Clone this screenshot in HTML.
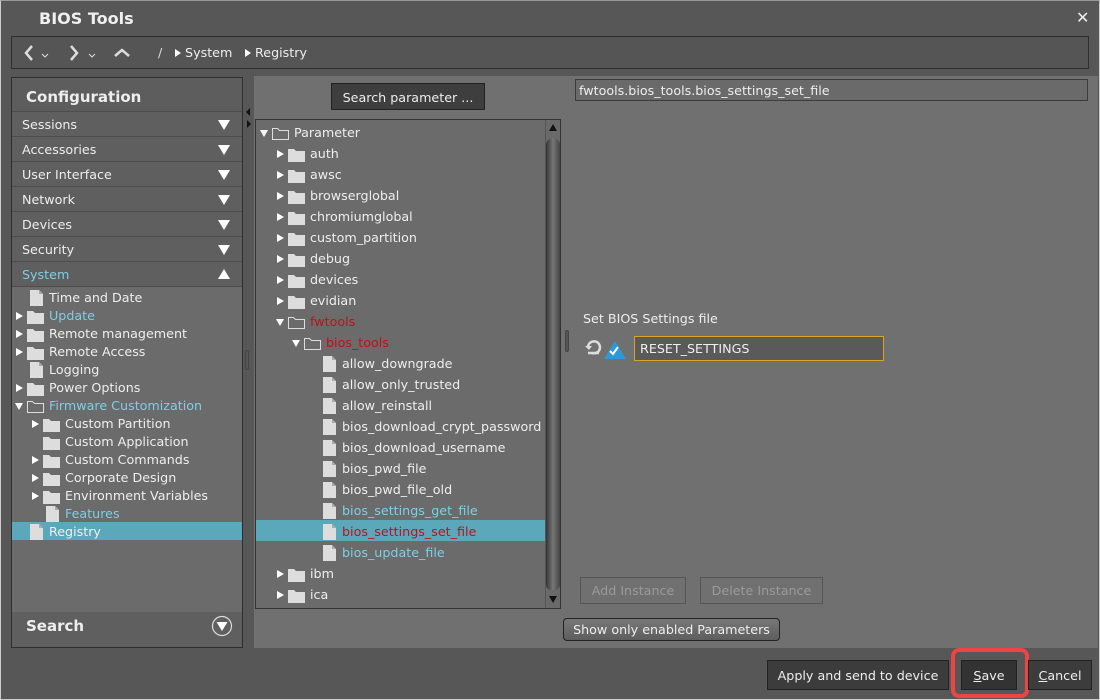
<!DOCTYPE html>
<html><head><meta charset="utf-8"><style>
*{margin:0;padding:0;box-sizing:border-box}
body{width:1100px;height:700px;background:#575757;font-family:"DejaVu Sans","Liberation Sans",sans-serif;font-size:12.7px;color:#eee;position:relative;overflow:hidden}
.a{position:absolute;white-space:nowrap}
.win{position:absolute;left:0;top:0;width:1100px;height:700px;border:1px solid #ccc;border-top-color:#999}
.tri{display:inline-block;width:0;height:0;border-top:4px solid transparent;border-bottom:4px solid transparent;border-left:7px solid #fff}
.trd{display:inline-block;width:0;height:0;border-left:4px solid transparent;border-right:4px solid transparent;border-top:7px solid #fff}
.sec{position:absolute;left:12px;width:230px;height:25px;border-top:1px solid #4c4c4c;background:#5f5f5f;line-height:26px;padding-left:10px}
.sec .dd{position:absolute;right:12px;top:8px;border-left:6px solid transparent;border-right:6px solid transparent;border-top:10px solid #fff;width:0;height:0}
.sec .du{position:absolute;right:12px;top:7px;border-left:6px solid transparent;border-right:6px solid transparent;border-bottom:10px solid #fff;width:0;height:0}
.lt{position:absolute;height:18px;line-height:20px;white-space:nowrap}
.mt{position:absolute;height:21px;line-height:23px;white-space:nowrap}
.btn{position:absolute;background:#3c3c3c;border:1px solid #222;color:#eee;text-align:center}
.blue{color:#7ccfe6}.red{color:#c0101a}
</style></head><body>
<div class="win"></div>
<div class="a" style="left:39px;top:9px;font-size:16px;font-weight:bold;color:#f0f0f0">BIOS Tools</div>
<div class="a" style="left:1076px;top:8px;font-size:16px;font-weight:bold">✕</div>
<div class="a" style="left:11px;top:36px;width:1078px;height:33px;background:#555;border:1px solid #2e2e2e"></div>
<svg class="a" style="left:20px;top:43px" width="120" height="20"><path d="M12 3l-6 7 6 7" stroke="#ddd" stroke-width="2.5" fill="none"/><path d="M22 11l3 3 3-3" stroke="#ddd" fill="none"/><path d="M51 3l6 7-6 7" stroke="#ddd" stroke-width="2.5" fill="none"/><path d="M69 11l3 3 3-3" stroke="#ddd" fill="none"/><path d="M95 13l7-6 7 6" stroke="#ddd" stroke-width="2.5" fill="none"/></svg>
<div class="a" style="left:158px;top:45px;color:#ddd">/</div>
<div class="a" style="left:175px;top:45px"><span class="tri" style="border-left-width:6px"></span> System</div>
<div class="a" style="left:245px;top:45px"><span class="tri" style="border-left-width:6px"></span> Registry</div>
<div class="a" style="left:11px;top:77px;width:232px;height:571px;background:#6b6b6b;border:1px solid #2e2e2e"></div>
<div class="a" style="left:12px;top:78px;width:230px;height:33px;background:#5d5d5d"></div>
<div class="a" style="left:26px;top:88px;font-size:15px;font-weight:bold">Configuration</div>
<div class="sec" style="top:111px">Sessions<span class="dd"></span></div>
<div class="sec" style="top:136px">Accessories<span class="dd"></span></div>
<div class="sec" style="top:161px">User Interface<span class="dd"></span></div>
<div class="sec" style="top:186px">Network<span class="dd"></span></div>
<div class="sec" style="top:211px">Devices<span class="dd"></span></div>
<div class="sec" style="top:236px">Security<span class="dd"></span></div>
<div class="sec blue" style="top:261px;border-bottom:1px solid #4c4c4c;height:26px">System<span class="du"></span></div>
<div class="a" style="left:12px;top:522px;width:230px;height:18px;background:#5aa8b9"></div>
<div class="a" style="left:12px;top:612px;width:230px;height:35px;background:#5f5f5f"></div>
<div class="a" style="left:26px;top:617px;font-size:15px;font-weight:bold">Search</div>
<svg class="a" style="left:211px;top:615px" width="22" height="22"><circle cx="11" cy="11" r="9.5" fill="none" stroke="#ddd" stroke-width="1.2"/><path d="M5.5 7h11L11 16z" fill="#fff"/></svg>
<div id="lt"></div>
<div class="a" style="left:246px;top:108px;width:0;height:0;border-top:4px solid transparent;border-bottom:4px solid transparent;border-right:4px solid #111"></div>
<div class="a" style="left:247px;top:120px;width:0;height:0;border-top:4px solid transparent;border-bottom:4px solid transparent;border-left:4px solid #111"></div>
<div class="a" style="left:245px;top:350px;width:4px;height:20px;border:1px solid #444;border-radius:2px"></div>
<div class="a" style="left:254px;top:76px;width:844px;height:572px;background:#707070"></div>
<div class="btn" style="left:331px;top:83px;width:154px;height:27px;line-height:27px;background:#3e3e3e">Search parameter ...</div>
<div class="a" style="left:575px;top:79px;width:513px;height:22px;background:#6a6a6a;border:1px solid #3c3c3c;line-height:21px;padding-left:3px">fwtools.bios_tools.bios_settings_set_file</div>
<div class="a" style="left:255px;top:119px;width:306px;height:490px;background:#6b6b6b;border:1px solid #333"></div>
<div class="a" style="left:545px;top:120px;width:15px;height:488px;background:#6a6a6a;border-left:1px solid #555"></div>
<div class="a" style="left:546px;top:138px;width:14px;height:452px;background:linear-gradient(90deg,#333,#777 50%,#444);border-radius:8px 8px 6px 6px"></div>
<div class="a" style="left:549px;top:124px;width:0;height:0;border-left:4px solid transparent;border-right:4px solid transparent;border-bottom:7px solid #111"></div>
<div class="a" style="left:549px;top:596px;width:0;height:0;border-left:4px solid transparent;border-right:4px solid transparent;border-top:7px solid #111"></div>
<div class="a" style="left:256px;top:520px;width:289px;height:21px;background:#5aa8b9"></div>
<div id="mt"></div>
<div class="a" style="left:565px;top:330px;width:4px;height:22px;border:1px solid #444;border-radius:2px;background:#555"></div>
<div class="a" style="left:583px;top:311px">Set BIOS Settings file</div>
<svg class="a" style="left:584px;top:338px" width="44" height="22"><path d="M4 9a6 6 0 1 1 4 6" stroke="#ddd" stroke-width="2.5" fill="none"/><path d="M1 8h7l-3 4z" fill="#ddd"/><path d="M4 15h11" stroke="#ddd" stroke-width="2.5"/><path d="M31 3l11 18H20z" fill="#2a9ad8"/><path d="M26 13l3 3 5-7" stroke="#fff" stroke-width="2" fill="none"/></svg>
<div class="a" style="left:634px;top:336px;width:250px;height:25px;background:#5a5a5a;border:1px solid #d9a520;line-height:24px;padding-left:5px">RESET_SETTINGS</div>
<div class="a" style="left:580px;top:577px;width:106px;height:27px;border:1px solid #555;color:#9a9a9a;text-align:center;line-height:26px">Add Instance</div>
<div class="a" style="left:700px;top:577px;width:123px;height:27px;border:1px solid #555;color:#9a9a9a;text-align:center;line-height:26px">Delete Instance</div>
<div class="a" style="left:563px;top:618px;width:217px;height:23px;border:1px solid #222;border-radius:4px;background:linear-gradient(#777,#5e5e5e);text-align:center;line-height:22px">Show only enabled Parameters</div>
<div class="btn" style="left:767px;top:660px;width:182px;height:30px;line-height:29px">Apply and send to device</div>
<div class="a" style="left:951px;top:648px;width:78px;height:50px;border:4px solid #ef4444;border-radius:8px"></div>
<div class="btn" style="left:961px;top:660px;width:56px;height:30px;line-height:29px;background:#333"><u>S</u>ave</div>
<div class="btn" style="left:1028px;top:660px;width:64px;height:30px;line-height:29px"><u>C</u>ancel</div>
<script>
const F='<svg width="17" height="14"><path d="M0 1h6l2 2h9v11H0z" fill="#ddd"/></svg>';
const O='<svg width="17" height="13"><path d="M.5 1.5h5l2 2h9v9H.5z" fill="none" stroke="#ddd"/></svg>';
const P='<svg width="13" height="16"><path d="M0 0h9l4 4v12H0z" fill="#ddd"/><path d="M9 0v4h4z" fill="#aaa"/></svg>';
function row(cls,top,lvl,arrow,icon,text,color,base,step,h,tx){
 let s='<div class="'+cls+'" style="top:'+top+'px;left:0;width:1px">';
 const x=base+lvl*step;
 if(arrow=='r')s+='<span class="tri a" style="left:'+x+'px;top:'+(h/2-3)+'px"></span>';
 if(arrow=='d')s+='<span class="trd a" style="left:'+(x-1)+'px;top:'+(h/2-2)+'px"></span>';
 s+='<span class="a" style="left:'+(x+(icon==P?14:11))+'px;top:'+(h/2-(icon==P?7:5))+'px;line-height:0">'+icon+'</span>';
 s+='<span class="a '+color+'" style="left:'+(x+tx)+'px;top:0">'+text+'</span></div>';
 return s;}
let L=[[0,'',P,'Time and Date',''],[0,'r',F,'Update','blue'],[0,'r',F,'Remote management',''],[0,'r',F,'Remote Access',''],[0,'',P,'Logging',''],[0,'r',F,'Power Options',''],[0,'d',O,'Firmware Customization','blue'],[1,'r',F,'Custom Partition',''],[1,'',F,'Custom Application',''],[1,'r',F,'Custom Commands',''],[1,'r',F,'Corporate Design',''],[1,'r',F,'Environment Variables',''],[1,'',P,'Features','blue'],[0,'',P,'Registry','']];
let h='';L.forEach((r,i)=>h+=row('lt',288+18*i,r[0],r[1],r[2],r[3],r[4],16,16,18,33));
document.getElementById('lt').innerHTML=h;
let M=[[0,'d',O,'Parameter',''],[1,'r',F,'auth',''],[1,'r',F,'awsc',''],[1,'r',F,'browserglobal',''],[1,'r',F,'chromiumglobal',''],[1,'r',F,'custom_partition',''],[1,'r',F,'debug',''],[1,'r',F,'devices',''],[1,'r',F,'evidian',''],[1,'d',O,'fwtools','red'],[2,'d',O,'bios_tools','red'],[3,'',P,'allow_downgrade',''],[3,'',P,'allow_only_trusted',''],[3,'',P,'allow_reinstall',''],[3,'',P,'bios_download_crypt_password',''],[3,'',P,'bios_download_username',''],[3,'',P,'bios_pwd_file',''],[3,'',P,'bios_pwd_file_old',''],[3,'',P,'bios_settings_get_file','blue'],[3,'',P,'bios_settings_set_file','red'],[3,'',P,'bios_update_file','blue'],[1,'r',F,'ibm',''],[1,'r',F,'ica','']];
h='';M.forEach((r,i)=>h+=row('mt',121+21*i,r[0],r[1],r[2],r[3],r[4],261,16,21,33));
document.getElementById('mt').innerHTML=h;
</script>
</body></html>
